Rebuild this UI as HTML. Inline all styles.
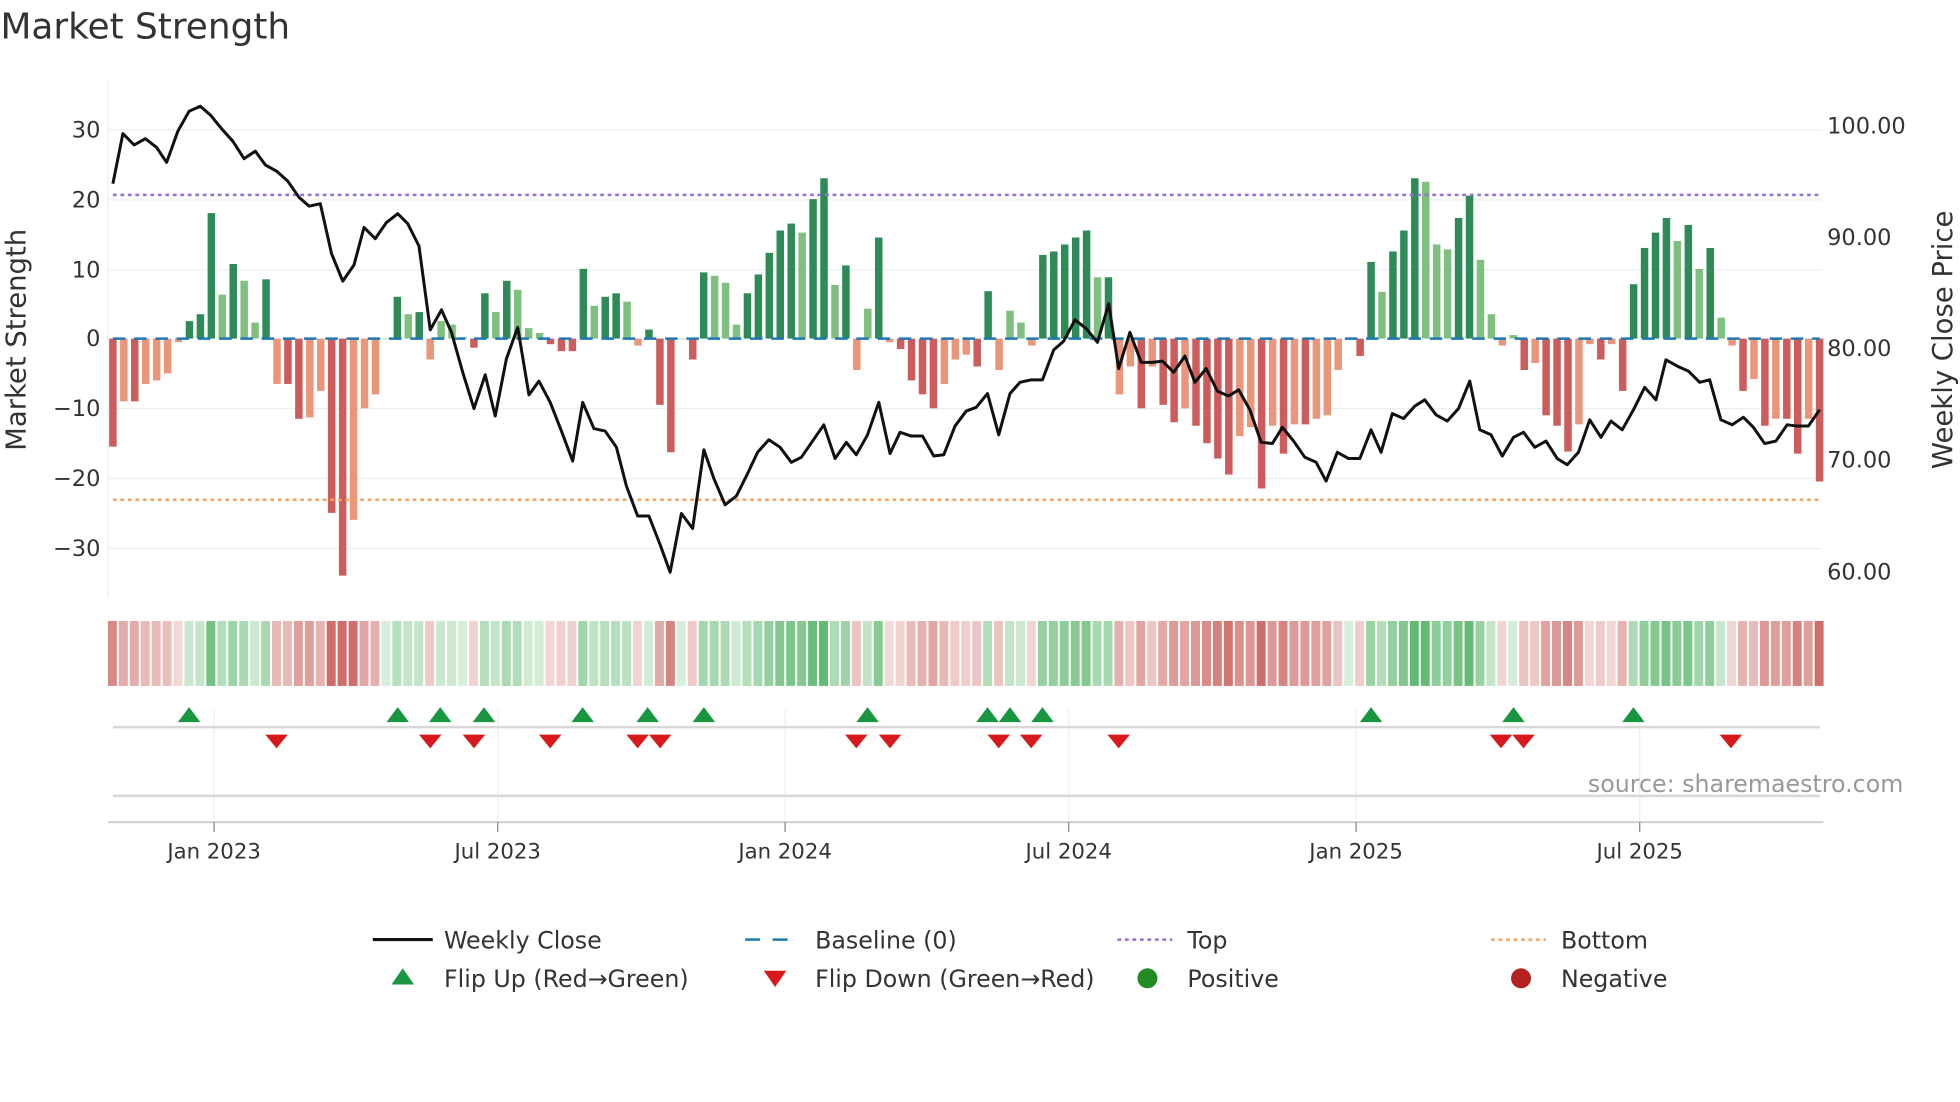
<!DOCTYPE html>
<html><head><meta charset="utf-8"><style>
html,body{margin:0;padding:0;background:#fff;}
svg{display:block;font-family:"DejaVu Sans","Liberation Sans",sans-serif;}
</style></head><body>
<svg id="c" width="1960" height="1102" viewBox="0 0 1568 882" xmlns="http://www.w3.org/2000/svg">
<rect width="1568" height="882" fill="#fff"/>
<text x="0" y="31" font-size="28.7" fill="#333">Market Strength</text>
<g stroke="#eceff2" stroke-width="1">
<line x1="86" y1="104" x2="1458" y2="104"/><line x1="86" y1="160" x2="1458" y2="160"/>
<line x1="86" y1="216" x2="1458" y2="216"/><line x1="86" y1="327" x2="1458" y2="327"/>
<line x1="86" y1="383" x2="1458" y2="383"/><line x1="86" y1="439" x2="1458" y2="439"/>
<line x1="86" y1="65" x2="86" y2="478"/>
</g>
<g font-size="18" fill="#333" text-anchor="end">
<text x="80" y="110">30</text><text x="80" y="166">20</text><text x="80" y="222">10</text>
<text x="80" y="277">0</text><text x="80" y="333">−10</text><text x="80" y="389">−20</text><text x="80" y="445">−30</text>
</g>
<g font-size="18" fill="#333">
<text x="1462" y="107">100.00</text><text x="1462" y="196">90.00</text><text x="1462" y="285">80.00</text>
<text x="1462" y="374">70.00</text><text x="1462" y="464">60.00</text>
</g>
<text transform="translate(20,272) rotate(-90)" font-size="22" fill="#333" text-anchor="middle">Market Strength</text>
<text transform="translate(1562,272) rotate(-90)" font-size="22" fill="#333" text-anchor="middle">Weekly Close Price</text>
<g id="bars"></g>
<line x1="90" y1="271" x2="1456" y2="271" stroke="#1f77b4" stroke-width="2" stroke-dasharray="10,7"/>
<line x1="90" y1="156" x2="1456" y2="156" stroke="#9370db" stroke-width="2" stroke-dasharray="3,3"/>
<line x1="90" y1="400" x2="1456" y2="400" stroke="#f4a460" stroke-width="2" stroke-dasharray="3,3"/>
<polyline id="price" fill="none" stroke="#111" stroke-width="2.4" stroke-linejoin="round"/>
<g id="heat"></g>
<g stroke="#eceff2"><line x1="171" y1="568" x2="171" y2="658"/><line x1="398" y1="568" x2="398" y2="658"/><line x1="628" y1="568" x2="628" y2="658"/><line x1="855" y1="568" x2="855" y2="658"/><line x1="1085" y1="568" x2="1085" y2="658"/><line x1="1312" y1="568" x2="1312" y2="658"/></g>
<line x1="90" y1="582" x2="1456" y2="582" stroke="#d8d8d8" stroke-width="2"/>
<line x1="90" y1="637" x2="1456" y2="637" stroke="#d8d8d8" stroke-width="2"/>
<line x1="86" y1="658" x2="1459" y2="658" stroke="#ccc" stroke-width="1.5"/>
<g id="flips"></g>
<text x="1523" y="634" font-size="19" fill="#999" text-anchor="end">source: sharemaestro.com</text>
<g stroke="#888"><line x1="171" y1="658" x2="171" y2="666"/><line x1="398" y1="658" x2="398" y2="666"/><line x1="628" y1="658" x2="628" y2="666"/><line x1="855" y1="658" x2="855" y2="666"/><line x1="1085" y1="658" x2="1085" y2="666"/><line x1="1312" y1="658" x2="1312" y2="666"/></g>
<g font-size="17" fill="#333" text-anchor="middle">
<text x="171" y="687">Jan 2023</text><text x="398" y="687">Jul 2023</text><text x="628" y="687">Jan 2024</text>
<text x="855" y="687">Jul 2024</text><text x="1085" y="687">Jan 2025</text><text x="1312" y="687">Jul 2025</text>
</g>
<g font-size="19" fill="#333">
<line x1="298" y1="752" x2="346" y2="752" stroke="#111" stroke-width="2.5"/><text x="355" y="759">Weekly Close</text>
<line x1="596" y1="752" x2="640" y2="752" stroke="#1f77b4" stroke-width="2" stroke-dasharray="12,10"/><text x="652" y="759">Baseline (0)</text>
<line x1="894" y1="752" x2="938" y2="752" stroke="#9370db" stroke-width="2" stroke-dasharray="3,3"/><text x="950" y="759">Top</text>
<line x1="1193" y1="752" x2="1237" y2="752" stroke="#f4a460" stroke-width="2" stroke-dasharray="3,3"/><text x="1249" y="759">Bottom</text>
<polygon points="313,788 331,788 322,775" fill="#1a9641"/><text x="355" y="790">Flip Up (Red→Green)</text>
<polygon points="611,777 629,777 620,790" fill="#d7191c"/><text x="652" y="790">Flip Down (Green→Red)</text>
<circle cx="918" cy="783" r="8" fill="#228b22"/><text x="950" y="790">Positive</text>
<circle cx="1217" cy="783" r="8" fill="#b22222"/><text x="1249" y="790">Negative</text>
</g>
</svg>
<script>
var NS="http://www.w3.org/2000/svg";
var v=[-15.5,-9,-9,-6.5,-6,-5,-0.5,2.5,3.5,18,6.3,10.7,8.3,2.3,8.5,-6.5,-6.5,-11.5,-11.3,-7.5,-25,-34,-26,-10,-8,0,6,3.5,3.8,-3,2.5,2,0.2,-1.3,6.5,3.8,8.3,7,1.5,0.8,-0.8,-1.8,-1.8,10,4.7,6,6.5,5.3,-1,1.3,-9.5,-16.3,0,-3,9.5,9,8,2,6.5,9.2,12.3,15.5,16.5,15.2,20,23,7.7,10.5,-4.5,4.3,14.5,-0.5,-1.5,-6,-8,-10,-6.5,-3,-2.3,-4,6.8,-4.5,4,2.3,-1,12,12.5,13.5,14.5,15.5,8.8,8.8,-8,-4,-10,-4,-9.5,-12,-10,-12.5,-15,-17.2,-19.5,-14,-12.7,-21.5,-12.5,-16.5,-12.3,-12.3,-11.5,-11,-4.5,0,-2.5,11,6.7,12.5,15.5,23,22.5,13.5,12.8,17.3,20.5,11.3,3.5,-1,0.5,-4.5,-3.5,-11,-12.5,-16.2,-12.3,-0.8,-3,-0.8,-7.5,7.8,13,15.2,17.3,14,16.3,10,13,3,-1,-7.5,-5.8,-12.5,-11.5,-11.5,-16.5,-11.5,-20.5];
var n=v.length,step=(1456-90)/(n-1);
var bars=document.getElementById('bars'),heat=document.getElementById('heat');
function rect(g,x,y,w,h,f){var r=document.createElementNS(NS,'rect');r.setAttribute('x',x);r.setAttribute('y',y);r.setAttribute('width',w);r.setAttribute('height',h);r.setAttribute('fill',f);g.appendChild(r);}
for(var i=0;i<n;i++){
 var x=90+i*step,val=v[i],prev=i>0?v[i-1]:val,col;
 var weaker=Math.abs(val)<Math.abs(prev);
 if(val>=0)col=weaker?'#7fbf7f':'#2e8b57';else col=weaker?'#e9967a':'#cd5c5c';
 var h=Math.abs(val)*5.58,y=val>=0?271-h:271;
 rect(bars,x-3,y,6,Math.max(h,0.5),col);
 var a=Math.min(1,0.25+Math.abs(val)/28);
 var hc=val>=0?'rgba(60,170,80,'+a*0.8+')':'rgba(190,60,55,'+a*0.75+')';
 rect(heat,x-4,497,7.2,52,hc);
}
var p=[90,147,98,107,107,116,116,111,125,118,133,130,142,105,151,89,160,85,168,92,177,103,186,113,195,127,204,121,212,132,221,137,230,145,239,158,247,165,256,163,265,203,274,225,283,212,291,182,300,191,309,178,318,171,326,179,335,197,344,264,353,248,361,266,370,298,379,327,388,300,396,333,405,287,414,262,423,316,431,305,440,322,449,345,458,369,466,322,475,343,484,345,493,358,501,389,510,413,519,413,528,436,536,458,545,411,554,423,563,360,571,383,580,404,589,397,598,379,606,362,615,352,624,358,633,370,641,366,650,353,659,340,668,367,677,354,685,364,694,348,703,322,712,363,720,346,729,349,738,349,747,365,755,364,764,341,773,329,781,326,790,315,799,348,808,315,816,306,825,304,834,304,843,280,851,273,860,256,869,263,878,274,887,243,895,295,904,266,913,290,922,290,930,289,939,298,948,285,956,306,965,295,974,313,983,317,991,312,1000,328,1009,354,1018,355,1026,342,1035,353,1044,366,1053,370,1061,385,1070,362,1079,367,1088,367,1097,344,1105,362,1114,331,1123,335,1132,325,1140,320,1149,332,1158,337,1167,327,1176,305,1184,344,1193,348,1202,365,1211,350,1219,346,1228,358,1237,353,1246,367,1254,372,1263,362,1272,336,1281,350,1289,337,1298,344,1307,328,1316,310,1325,320,1333,288,1342,293,1351,297,1360,306,1368,304,1377,336,1386,340,1395,334,1403,342,1412,355,1421,353,1430,340,1438,341,1447,341,1456,328];
var s=[];for(var i=0;i<p.length;i+=2)s.push(p[i]+','+p[i+1]);
document.getElementById('price').setAttribute('points',s.join(' '));
var fl=document.getElementById('flips');
[151,318,352,387,466,518,563,694,790,808,834,1097,1211,1307].forEach(function(x){var t=document.createElementNS(NS,'polygon');t.setAttribute('points',(x-9)+',578 '+(x+9)+',578 '+x+',566');t.setAttribute('fill','#1a9641');fl.appendChild(t);});
[221,344,379,440,510,528,685,712,799,825,895,1201,1219,1385].forEach(function(x){var t=document.createElementNS(NS,'polygon');t.setAttribute('points',(x-9)+',588 '+(x+9)+',588 '+x+',599');t.setAttribute('fill','#d7191c');fl.appendChild(t);});
</script>
</body></html>
